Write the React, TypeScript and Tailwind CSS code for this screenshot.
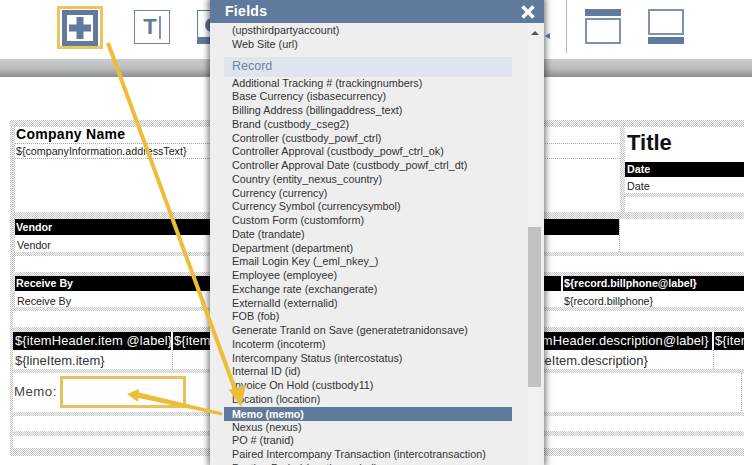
const sans = "font-['Liberation_Sans',Arial,sans-serif]";
const band = "bg-[repeating-conic-gradient(#c4c4c4_0_25%,#ffffff_0_50%)] bg-[length:2px_2px]";
const rows1 = ["Additional Tracking # (trackingnumbers)","Base Currency (isbasecurrency)","Billing Address (billingaddress_text)","Brand (custbody_cseg2)","Controller (custbody_powf_ctrl)","Controller Approval (custbody_powf_ctrl_ok)","Controller Approval Date (custbody_powf_ctrl_dt)","Country (entity_nexus_country)","Currency (currency)","Currency Symbol (currencysymbol)","Custom Form (customform)","Date (trandate)","Department (department)","Email Login Key (_eml_nkey_)","Employee (employee)","Exchange rate (exchangerate)","ExternalId (externalid)","FOB (fob)","Generate TranId on Save (generatetranidonsave)","Incoterm (incoterm)","Intercompany Status (intercostatus)","Internal ID (id)","Invoice On Hold (custbody11)","Location (location)"];
const rows2 = ["Nexus (nexus)","PO # (tranid)","Paired Intercompany Transaction (intercotransaction)","Posting Period (postingperiod)"];

function Band({ className = "" }: { className?: string }) {
  return <div className={`${band} ${className}`} />;
}
function Row({ t }: { t: string }) {
  return <div className="h-[13.75px] pl-[22px] leading-[13.75px] whitespace-nowrap text-[#333]">{t}</div>;
}
function Toolbar() {
  return (
    <div className="relative flex h-[59px] items-start bg-white pl-[57px]">
      <div className="mt-[6px] flex h-[43px] w-[46px] items-center justify-center border-[3px] border-[#eec55a]">
        <div className="flex h-[36px] w-[36px] shrink-0 items-center justify-center border-[5px] border-[#5f7a9c] bg-white">
          <svg width="24" height="24" viewBox="0 0 24 24"><path d="M8.500 1h7v7.500h7.500v7h-7.500v7.500h-7v-7.500h-7.500v-7h7.500z" fill="#5f7a9c" /></svg>
        </div>
      </div>
      <div className="ml-[31px] mt-[10px] flex h-[34px] w-[36px] items-center justify-center gap-[2px] border border-[#6f86a5]">
        <span className={`${sans} text-[22px] font-bold leading-none text-[#5f7a9c]`}>T</span>
        <div className="h-[23px] w-[2px] bg-[#7f93ae]" />
      </div>
      <div className="ml-[27px] mt-[10px] h-[34px] w-[36px] overflow-hidden border border-b-[7px] border-[#5f7a9c]">
        <div className="ml-[7px] mt-[7px] h-[14px] w-[14px] rounded-full bg-[#5f7a9c]" />
      </div>
      <div className="ml-[333px] h-[53px] w-px bg-[#b5b5b5]" />
      <div className="ml-[18px] mt-[9px] flex h-[35px] w-[36px] flex-col gap-[2px]">
        <div className="h-[7px] bg-[#5f7a9c]" />
        <div className="flex-1 border-[2px] border-[#7f93ae]" />
      </div>
      <div className="ml-[27px] mt-[9px] flex h-[35px] w-[36px] flex-col gap-[2px]">
        <div className="flex-1 border-[2px] border-[#7f93ae]" />
        <div className="h-[7px] bg-[#5f7a9c]" />
      </div>
      <div className="absolute left-[545px] top-[33px] h-0 w-0 border-y-[3px] border-r-[5px] border-y-transparent border-r-[#5f7a9c]" />
    </div>
  );
}
function Doc() {
  return (
    <div className={`${sans} ml-[10px] w-[734px] pt-[43px] text-[10.7px] text-[#222]`}>
      <Band className="h-[7px]" />
      <div className="flex">
        <Band className="w-[3px] shrink-0" />
        <div className="min-w-0 flex-1">
          <div className="flex h-[85px]">
            <Band className="w-[2px]" />
            <div className="w-[605px]">
              <div className="h-[17px] border-b border-dotted border-[#aaa] pl-[1px] text-[14px] font-bold leading-[15px] tracking-[0.3px] text-black">Company Name</div>
              <div className="h-[15px] border-b border-dotted border-[#aaa] pl-[1px] leading-[15px]">{"${companyInformation.addressText}"}</div>
            </div>
            <Band className="w-[5px]" />
            <div className="flex-1 pl-[2px]">
              <div className="h-[35px] text-[22px] font-bold leading-[32px] text-[#111]">Title</div>
              <div className="ml-[-2px] h-[15px] bg-black pl-[2px] font-bold leading-[15px] text-white">Date</div>
              <div className="h-[16px] leading-[18px]">Date</div>
              <Band className="ml-[-2px] h-[4px]" />
            </div>
          </div>
          <Band className="h-[7px]" />
          <div className="flex h-[33px]">
            <Band className="w-[2px]" />
            <div className="w-[604px]">
              <div className="h-[16px] bg-black pl-[1px] font-bold leading-[16px] text-white">Vendor</div>
              <div className="h-[17px] pl-[2px] leading-[20px]">Vendor</div>
            </div>
            <div className="w-px border-r border-dotted border-[#aaa]" />
          </div>
          <Band className="h-[4px]" />
          <div className="flex h-[16px]"><Band className="w-[2px]" /></div>
          <Band className="h-[4px]" />
          <div className="flex h-[31px]">
            <Band className="w-[2px] shrink-0" />
            <div className="w-[546px]">
              <div className="h-[15px] bg-black pl-[1px] font-bold leading-[15px] text-white">Receive By</div>
              <div className="h-[16px] pl-[2px] leading-[20px]">Receive By</div>
            </div>
            <div className="w-[2px] border-l border-dotted border-white" />
            <div className="flex-1">
              <div className="h-[15px] bg-black pl-[1px] font-bold leading-[15px] text-white">{"${record.billphone@label}"}</div>
              <div className="h-[16px] pl-[1px] leading-[20px]">{"${record.billphone}"}</div>
            </div>
          </div>
          <Band className="h-[4px]" />
          <div className="h-[16px]" />
          <Band className="h-[5px]" />
          <div className="flex h-[18px] bg-black text-[12.9px] leading-[18px] tracking-[0.15px] text-white">
            <div className="w-[158px] shrink-0 whitespace-nowrap pl-[2px]">{"${itemHeader.item @label}"}</div>
            <div className="w-[2px] shrink-0 bg-white" />
            <div className="w-[343px] shrink-0 overflow-hidden pl-[1px]">{"${itemHeader.item @label}"}</div>
            <div className="w-[196px] shrink-0 overflow-hidden whitespace-nowrap">{"${itemHeader.description@label}"}</div>
            <div className="w-[2px] shrink-0 bg-white" />
            <div className="min-w-0 flex-1 overflow-hidden whitespace-nowrap pl-[1px]">{"${item"}</div>
          </div>
          <div className="flex h-[19px] text-[13px] leading-[22px] text-[#333]">
            <div className="w-[158px] shrink-0 whitespace-nowrap pl-[2px]">{"${lineItem.item}"}</div>
            <div className="w-[2px] shrink-0 border-r border-dotted border-[#aaa]" />
            <div className="w-[347px] shrink-0" />
            <div className="w-[192px] shrink-0 whitespace-nowrap">{"${lineItem.description}"}</div>
            <div className="w-[2px] shrink-0 border-r border-dotted border-[#aaa]" />
          </div>
          <Band className="h-[4px]" />
          <div className="flex h-[39px] items-center pb-[1px] pr-[2px] text-[13.2px] text-[#444]">
            <span className="pl-[1px] tracking-[0.5px]">Memo:</span>
            <div className="h-full flex-1" />
            <div className="h-full border-r border-dotted border-[#aaa]" />
          </div>
          <Band className="h-[4px]" />
          <div className="h-[15px]" />
          <Band className="h-[5px]" />
          <div className="h-[12px]" />
          <Band className="h-[8px]" />
        </div>
      </div>
    </div>
  );
}
function Modal() {
  return (
    <div className={`${sans} absolute left-[210px] top-0 flex h-[465px] w-[334px] flex-col bg-[#eeeeee] shadow-[0_0_6px_2px_rgba(0,0,0,0.5)]`}>
      <div className="flex h-[23px] items-center justify-between bg-[#5f7a9c] pl-[15px] pr-[9px] text-white">
        <span className="text-[14px] font-bold tracking-[0.3px]">Fields</span>
        <svg width="14" height="14" viewBox="0 0 14 14" fill="none"><path d="M1.500 1.500L12.500 12.500M12.500 1.500L1.500 12.500" stroke="#ffffff" strokeWidth="3.500" /></svg>
      </div>
      <div className="relative flex-1 overflow-hidden text-[10.8px]">
        <div className="pt-[1px]">
          <Row t="(upsthirdpartyaccount)" />
          <Row t="Web Site (url)" />
          <div className="ml-[14px] mt-[5px] h-[20px] w-[288px] bg-[#dfe5ee] pl-[8px] text-[12.5px] leading-[19px] text-[#6d84a3]">Record</div>
          {rows1.map((r) => <Row key={r} t={r} />)}
          <div className="ml-[14px] h-[14px] w-[288px] whitespace-nowrap bg-[#5f7a9c] pl-[8px] text-[10.6px] font-bold leading-[14px] text-white">Memo (memo)</div>
          {rows2.map((r) => <Row key={r} t={r} />)}
        </div>
        <div className="absolute right-[3px] top-0 flex h-full w-[13px] flex-col items-center bg-[#f0f0f0]">
          <div className="mt-[8px] h-0 w-0 border-x-[4px] border-b-[4px] border-x-transparent border-b-[#555]" />
          <div className="mt-[192px] h-[160px] w-full bg-[#c1c1c1]" />
        </div>
      </div>
    </div>
  );
}
function Annotations() {
  return (
    <>
      <div className="absolute left-[60px] top-[376px] h-[32px] w-[126px] border-[3px] border-[#e9c25e]" />
      <svg className="absolute left-0 top-0" width="752" height="465" viewBox="0 0 752 465" fill="none">
        <path d="M108 43 L237 395" stroke="#edbd3a" strokeWidth="4" />
        <path d="M241 407 L229 390 L246 385 Z" fill="#edbd3a" />
        <path d="M222 414 L136 396 L135 393 Z" fill="#edbd3a" stroke="#edbd3a" strokeWidth="3" />
        <path d="M127 394 L139 389 L138 402 Z" fill="#edbd3a" />
      </svg>
    </>
  );
}
export default function App() {
  return (
    <div className="relative h-[465px] w-[752px] overflow-hidden bg-white">
      <Toolbar />
      <div className="h-[18px] bg-gradient-to-b from-[#c8cccf] via-[#bbbfc2] to-[#8e9092]" />
      <Doc />
      <Modal />
      <Annotations />
    </div>
  );
}
